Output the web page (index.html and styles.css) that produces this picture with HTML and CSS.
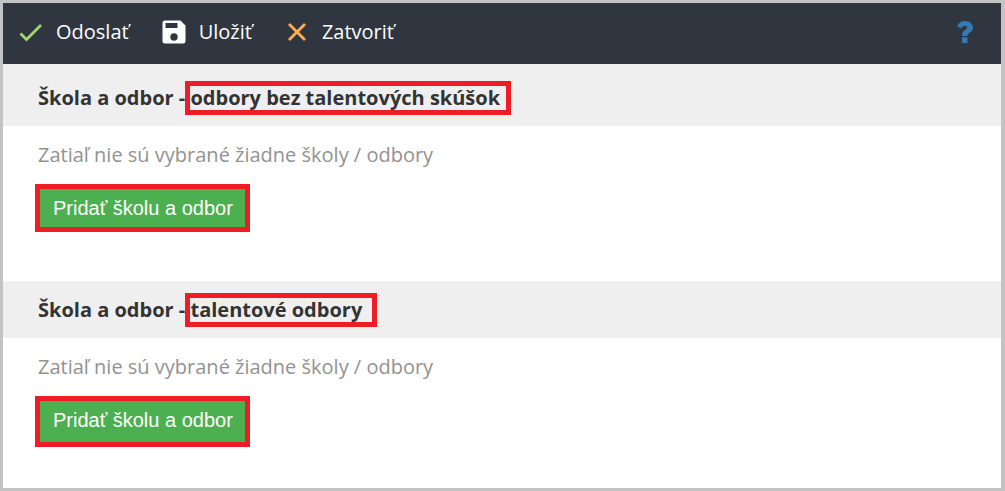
FILE: index.html
```html
<!DOCTYPE html>
<html lang="sk">
  <head>
    <meta charset="UTF-8" />
    <meta name="viewport" content="width=device-width, initial-scale=1.0" />
    <title>Škola a odbor</title>
    <link rel="stylesheet" href="styles.css">
  </head>
  <body>
    <div class="window">
      <div class="toolbar">
        <button type="button" class="tool">
          <svg class="icon" width="24" height="24" viewBox="0 0 24 24"><path d="M1.500 13.500l6 6L22 5" fill="none" stroke="#a5d66f" stroke-width="2.800"/></svg>
          Odoslať
        </button>
        <button type="button" class="tool">
          <svg class="icon" width="24" height="24" viewBox="0 0 24 24"><path fill="#fff" fill-rule="evenodd" d="M3 .5h15.500l5 5V21a2.500 2.500 0 0 1-2.500 2.500H3A2.500 2.500 0 0 1 .5 21V3A2.500 2.500 0 0 1 3 .5zM3.500 3v5h12V3zM12 13.300a3.700 3.700 0 1 0 0 7.400a3.700 3.700 0 0 0 0-7.400z"/></svg>
          Uložiť
        </button>
        <button type="button" class="tool">
          <svg class="icon" width="24" height="24" viewBox="0 0 24 24"><path d="M4 4l16 16M20 4L4 20" fill="none" stroke="#ffb04c" stroke-width="2.800"/></svg>
          Zatvoriť
        </button>
        <button type="button" class="help" aria-label="Pomocník">
          <svg class="icon" width="16" height="22" viewBox="0 0 16 22"><path fill="#337ab7" d="M5 16.300h5.500V22H5zM0 5.200C1.700 1.900 4.400 0 8.200 0C12.300 0 16 2.900 16 6.600c0 2.500-1.300 4-3.300 5.200c-1.500.9-2.200 1.400-2.200 3.200H5c0-3.600 1-4.800 3.200-6.100c1.400-.8 2-1.300 2-2.300c0-1.100-1.100-1.800-2.400-1.800c-1.500 0-2.400.8-3.600 2.500z"/></svg>
        </button>
      </div>

      <div class="section">
        <h2 class="title first">Škola a odbor - <span class="mark">odbory bez talentových skúšok</span></h2>
        <div class="content">
          <p class="empty">Zatiaľ nie sú vybrané žiadne školy / odbory</p>
          <button type="button" class="add">Pridať školu a odbor</button>
        </div>
      </div>

      <div class="section">
        <h2 class="title">Škola a odbor - <span class="mark wide">talentové odbory</span></h2>
        <div class="content">
          <p class="empty">Zatiaľ nie sú vybrané žiadne školy / odbory</p>
          <button type="button" class="add tall">Pridať školu a odbor</button>
        </div>
      </div>
    </div>
  </body>
</html>
```
FILE: styles.css
```css
* {
  margin: 0;
  padding: 0;
  box-sizing: border-box;
}
body {
  font-family: "Open Sans", "Noto Sans", sans-serif;
  font-size: 20px;
  line-height: 28px;
  color: #333;
  background-color: #fff;
}
.window {
  min-height: 100vh;
  border: 3px solid #c3c3c3;
  border-right-width: 4px;
}
button {
  border: none;
  background: none;
  cursor: pointer;
}
.icon {
  display: block;
}
/* horná lišta */
.toolbar {
  display: flex;
  align-items: center;
  gap: 33px;
  padding: 15px 28px 18px 16px;
  background-color: #2f3640;
}
.tool {
  display: flex;
  align-items: center;
  gap: 13px;
  font-family: inherit;
  font-size: 20px;
  line-height: 28px;
  color: #fff;
}
.help {
  margin-left: auto;
}
/* nadpis sekcie */
.title {
  padding: 15px 35px 14px;
  font-size: 20px;
  font-weight: 700;
  line-height: 28px;
  background-color: #efefef;
}
.title.first {
  padding-top: 20px;
}
.mark {
  display: inline-block;
  padding-right: 6px;
  line-height: 24px;
  outline: 5px solid #ee1c25;
}
.mark.wide {
  padding-right: 10px;
}
.content {
  padding: 15px 32px 49px;
}
.empty {
  margin: 0 3px 15px;
  color: #929292;
}
.add {
  padding: 5px 12px 5px 13px;
  border: 5px solid #ee1c25;
  font-family: "Liberation Sans", Arial, sans-serif;
  font-size: 20px;
  line-height: 28px;
  color: #fff;
  background-color: #4caf50;
}
.add.tall {
  padding-bottom: 8px;
}
.section:last-child .content {
  padding-bottom: 40px;
}
```
